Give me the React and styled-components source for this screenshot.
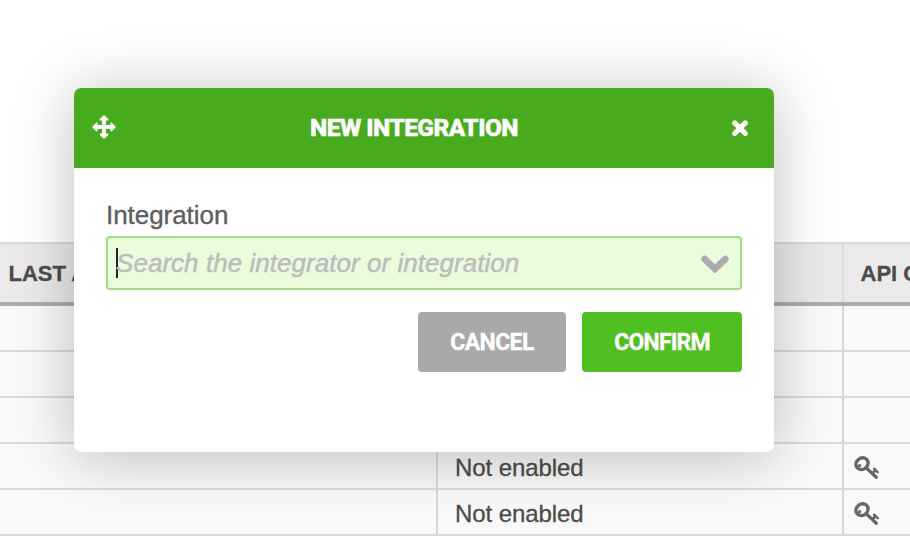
import React from "react";
import styled, { createGlobalStyle } from "styled-components";

const GlobalStyle = createGlobalStyle`
  *, *::before, *::after { box-sizing: border-box; }
  body { margin: 0; background: #fff; font-family: "Liberation Sans", Arial, sans-serif; }
`;

const Page = styled.main`
  position: relative;
  width: 910px;
  height: 536px;
  padding-top: 242px;
  overflow: hidden;
  background: #fff;
`;

const Table = styled.div`
  width: 100%;
  border-top: 2px solid #dadada;
`;

const Row = styled.div`
  display: grid;
  grid-template-columns: 438px 406px 66px;
  height: 46px;
  background: #f9f9f9;
  border-bottom: 2px solid #dadada;
`;

const HeaderRow = styled(Row)`
  height: 62px;
  background: #ebe9e9;
  border-bottom: 4px solid #acacac;
`;

const Cell = styled.div`
  display: flex;
  align-items: center;
  padding-left: 17px;
  border-right: 2px solid #dadada;
  color: #4c4c4c;
  font-size: 24px;
  letter-spacing: -0.08px;
  -webkit-text-stroke: 0.3px;
  white-space: nowrap;
  overflow: hidden;
  padding-top: 3px;
  &:last-child { border-right: 0; padding-left: 10px; }
`;

const HeaderCell = styled(Cell)`
  padding: 2px 0 0 8.5px;
  font-size: 22px;
  font-weight: 700;
  letter-spacing: 0;
  &:last-child { padding-left: 16.5px; padding-top: 2px; }
`;

const Dialog = styled.section`
  position: absolute;
  top: 88px;
  left: 74px;
  width: 700px;
  height: 364px;
  background: #fff;
  border-radius: 7px;
  box-shadow: 0 4px 60px rgba(0, 0, 0, 0.25);
`;

const DialogHeader = styled.header`
  display: flex;
  align-items: center;
  justify-content: space-between;
  height: 80px;
  padding: 0 25px 0 18px;
  background: #48ab1e;
  border-radius: 7px 7px 0 0;
  color: #fff;
`;

const Title = styled.h1`
  margin: 0;
  padding: 0 19px 0 0;
  font: 800 24.5px/30px Roboto, sans-serif;
  letter-spacing: -0.55px;
  -webkit-text-stroke: 0.5px;
  white-space: nowrap;
`;

const IconButton = styled.button`
  display: flex;
  padding: 0 0 ${(p) => p.$lift || "0"};
  border: 0;
  background: none;
  color: inherit;
`;

const Body = styled.div`
  padding: 32px 32px 0;
`;

const Label = styled.label`
  display: block;
  height: 36px;
  color: #5e5e5e;
  font-size: 26px;
  line-height: 30px;
  letter-spacing: -0.05px;
  -webkit-text-stroke: 0.35px;
`;

const Field = styled.div`
  display: flex;
  align-items: center;
  height: 54px;
  padding: 0 11px 0 8px;
  background: #e9fddd;
  border: 2px solid #a4dc87;
  border-radius: 4px;
`;

const Caret = styled.span`
  width: 2px;
  height: 30px;
  margin-right: -2px;
  background: #222;
`;

const Placeholder = styled.span`
  flex: 1;
  color: #bcbcbc;
  font-size: 26px;
  font-style: italic;
  line-height: 30px;
  letter-spacing: 0.04px;
  -webkit-text-stroke: 0.45px;
  white-space: nowrap;
`;

const Actions = styled.div`
  display: flex;
  justify-content: flex-end;
  gap: 16px;
  margin-top: 22px;
`;

const Button = styled.button`
  width: ${(p) => p.$width};
  height: 60px;
  padding: 2px 0 0;
  border: 0;
  border-radius: 4px;
  background: ${(p) => p.$color};
  color: #fff;
  font: 700 23px/30px Roboto, sans-serif;
  letter-spacing: ${(p) => p.$spacing};
  -webkit-text-stroke: 0.3px;
`;

const MoveIcon = () => (
  <svg width="24" height="24" viewBox="0 0 24 24" fill="currentColor">
    <path d="M12 0 16.4 4.3Q16.6 5.6 15.6 5.6H13.9V10.1H18.4V8.4Q18.6 7.4 19.6 7.6L24 12 19.6 16.4Q18.6 16.6 18.4 15.6V13.9H13.9V18.4H15.6Q16.6 18.4 16.4 19.7L12 24 7.6 19.7Q7.4 18.4 8.4 18.4H10.1V13.9H5.6V15.6Q5.4 16.6 4.4 16.4L0 12 4.4 7.6Q5.4 7.4 5.6 8.4V10.1H10.1V5.6H8.4Q7.4 5.6 7.6 4.3Z" />
  </svg>
);

const CloseIcon = () => (
  <svg width="18" height="18" viewBox="0 0 18 18" fill="none" stroke="currentColor" strokeWidth="5.2" strokeLinecap="round">
    <path d="M3.7 3.9 14.3 14.5M14.3 3.9 3.7 14.5" />
  </svg>
);

const ChevronIcon = () => (
  <svg width="28" height="20" viewBox="0 0 28 20" fill="none" stroke="#acacac" strokeWidth="6.6" strokeLinecap="round">
    <path d="M3.6 6 14 16 24.4 6" />
  </svg>
);

const KeyIcon = () => (
  <svg width="26" height="24" viewBox="0 0 26 24" fill="none" stroke="#666" strokeWidth="3.3" strokeLinecap="round">
    <ellipse cx="8" cy="7.7" rx="6.4" ry="5.6" transform="rotate(-40 8 7.7)" />
    <path d="M12 11.6 22.3 21.2" />
    <path d="M18.7 17 21 14.5M20.1 12.8 23.6 16.1" strokeWidth="2.6" />
    <circle cx="5.6" cy="9.7" r="1.7" fill="#666" stroke="none" />
  </svg>
);

const rows = [
  { status: "", key: false },
  { status: "", key: false },
  { status: "", key: false },
  { status: "Not enabled", key: true },
  { status: "Not enabled", key: true },
];

export default function App() {
  return (
    <Page>
      <GlobalStyle />
      <Table>
        <HeaderRow>
          <HeaderCell>LAST A</HeaderCell>
          <HeaderCell />
          <HeaderCell>API C</HeaderCell>
        </HeaderRow>
        {rows.map((row, i) => (
          <Row key={i}>
            <Cell />
            <Cell>{row.status}</Cell>
            <Cell>{row.key && <KeyIcon />}</Cell>
          </Row>
        ))}
      </Table>
      <Dialog role="dialog" aria-label="New integration">
        <DialogHeader>
          <IconButton aria-label="Move" $lift="2px"><MoveIcon /></IconButton>
          <Title>NEW INTEGRATION</Title>
          <IconButton aria-label="Close"><CloseIcon /></IconButton>
        </DialogHeader>
        <Body>
          <Label>Integration</Label>
          <Field>
            <Caret />
            <Placeholder>Search the integrator or integration</Placeholder>
            <ChevronIcon />
          </Field>
          <Actions>
            <Button $width="148px" $color="#a9a9a9" $spacing="-0.6px">CANCEL</Button>
            <Button $width="160px" $color="#4fbf21" $spacing="-0.85px">CONFIRM</Button>
          </Actions>
        </Body>
      </Dialog>
    </Page>
  );
}
